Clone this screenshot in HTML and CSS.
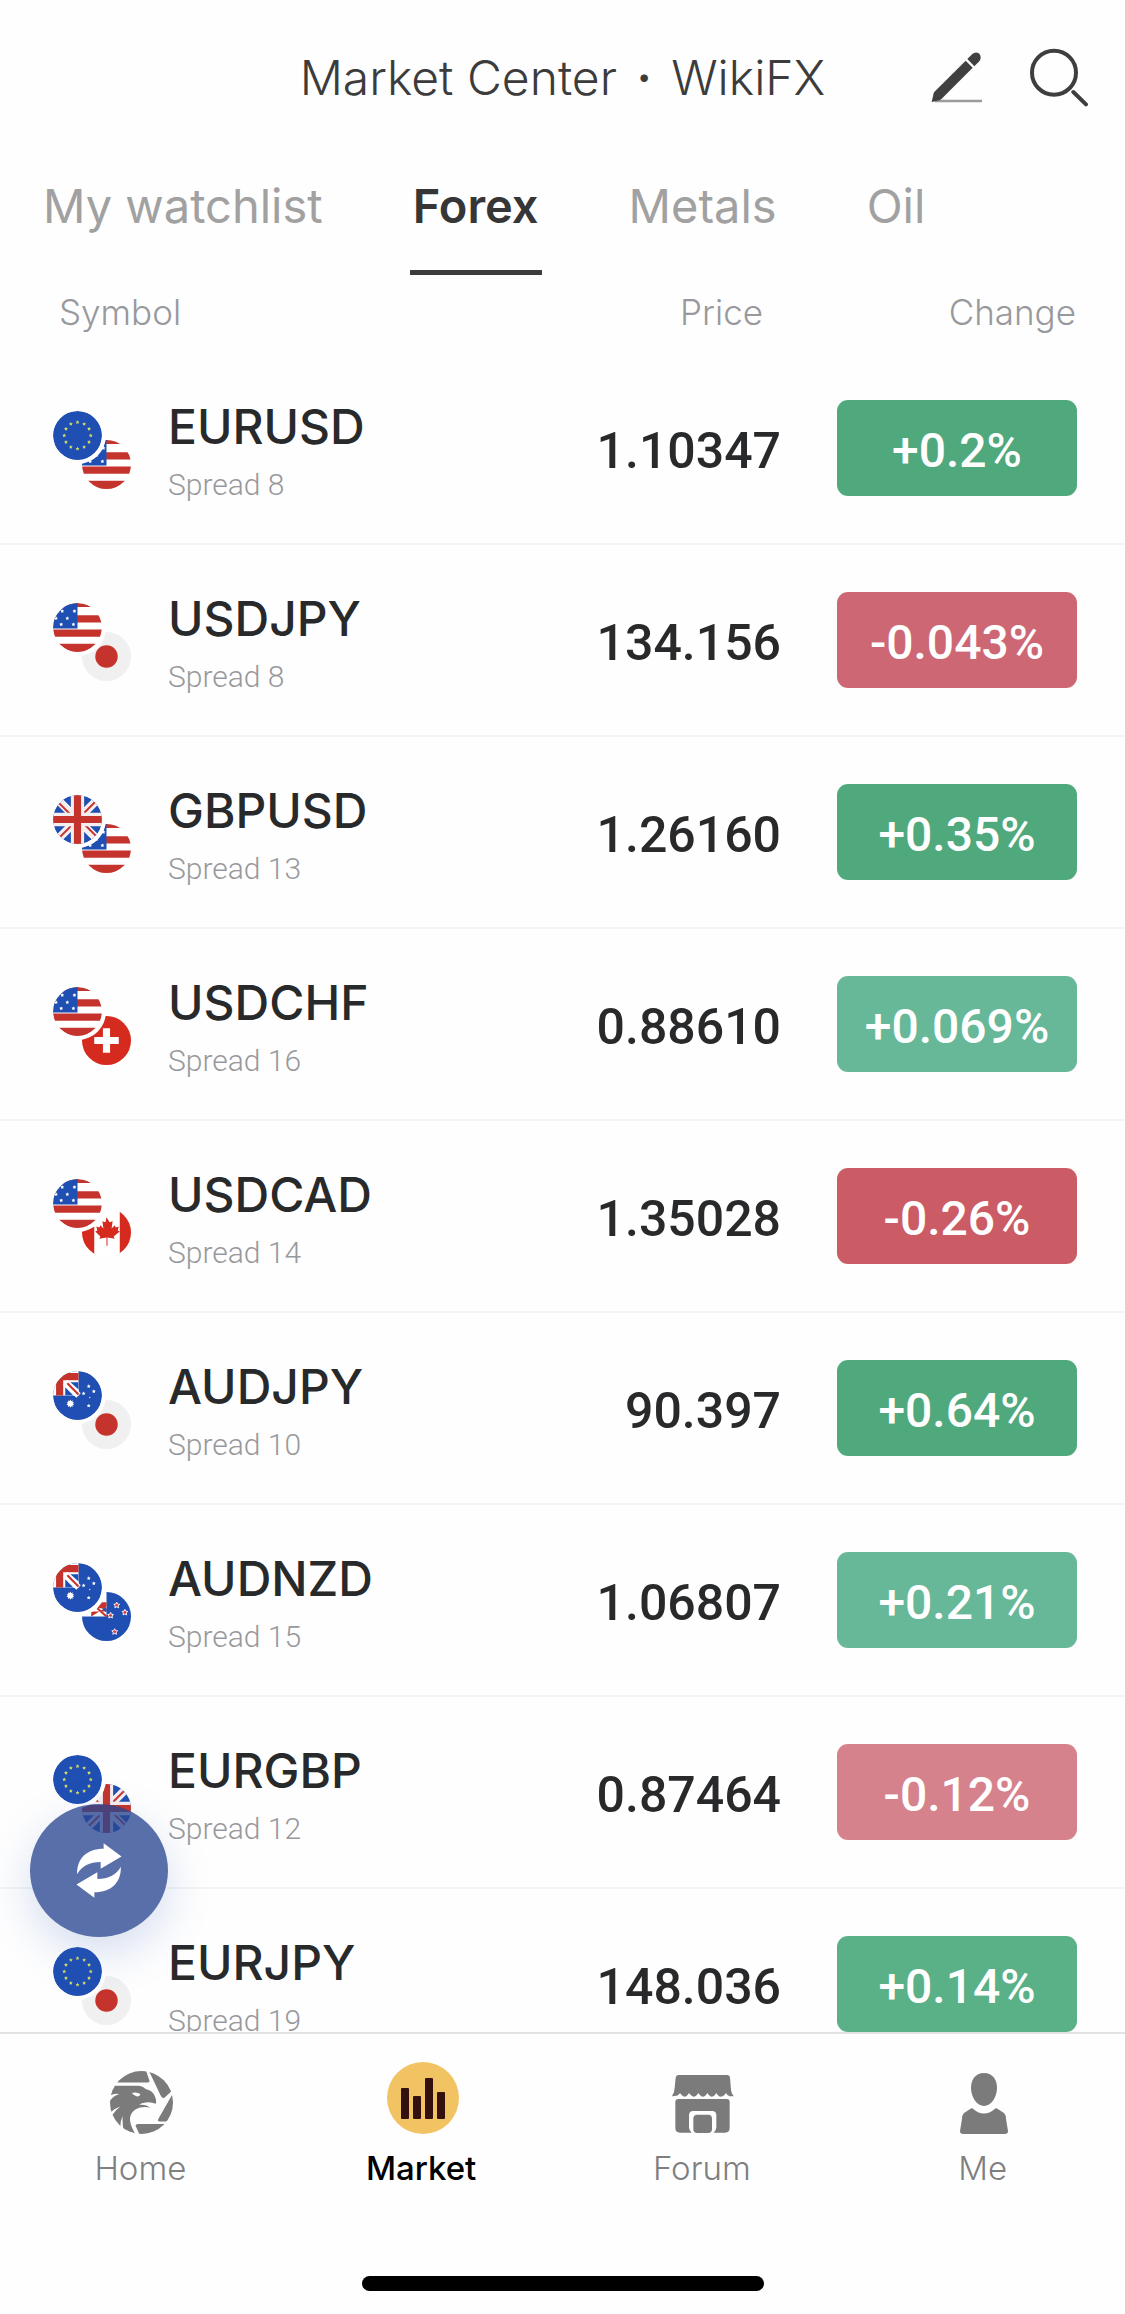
FILE: index.html
```html
<!DOCTYPE html>
<html lang="en">
<head>
<meta charset="utf-8">
<meta name="viewport" content="width=device-width, initial-scale=1">
<title>Market Center · WikiFX</title>
<link rel="stylesheet" href="styles.css">
</head>
<body>
<svg class="sprite" aria-hidden="true">
  <defs>
    <clipPath id="disc"><circle cx="24" cy="24" r="24"/></clipPath>
    <path id="star" d="M0-1L.29-.4L.95-.31L.48.15L.59.81L0 .5L-.59.81L-.48.15L-.95-.31L-.29-.4Z"/>
    <symbol id="eu" viewBox="0 0 48 48">
      <circle cx="24" cy="24" r="24" fill="#1f4fb2"/>
      <g fill="#d9dc62">
        <use href="#star" transform="translate(24 11) scale(2)"/><use href="#star" transform="translate(30.500 12.700) scale(2)"/>
        <use href="#star" transform="translate(35.300 17.500) scale(2)"/><use href="#star" transform="translate(37 24) scale(2)"/>
        <use href="#star" transform="translate(35.300 30.500) scale(2)"/><use href="#star" transform="translate(30.500 35.300) scale(2)"/>
        <use href="#star" transform="translate(24 37) scale(2)"/><use href="#star" transform="translate(17.500 35.300) scale(2)"/>
        <use href="#star" transform="translate(12.700 30.500) scale(2)"/><use href="#star" transform="translate(11 24) scale(2)"/>
        <use href="#star" transform="translate(12.700 17.500) scale(2)"/><use href="#star" transform="translate(17.500 12.700) scale(2)"/>
      </g>
    </symbol>
    <symbol id="us" viewBox="0 0 48 48">
      <g clip-path="url(#disc)">
        <rect width="48" height="48" fill="#fff"/>
        <path d="M0 0H48V4H0ZM0 12H48V19H0ZM0 26H48V33H0ZM0 40H48V48H0Z" fill="#c5342c"/>
        <rect width="24" height="25" fill="#1f4fb2"/>
        <g fill="#fff">
          <use href="#star" transform="translate(9 8) scale(2)"/><use href="#star" transform="translate(21 8) scale(2)"/>
          <use href="#star" transform="translate(3 15) scale(2)"/><use href="#star" transform="translate(14 15) scale(2)"/>
          <use href="#star" transform="translate(8 21) scale(2)"/><use href="#star" transform="translate(20 21) scale(2)"/>
        </g>
      </g>
    </symbol>
    <symbol id="jp" viewBox="0 0 48 48">
      <circle cx="24" cy="24" r="24" fill="#f0f0f0"/><circle cx="24" cy="24" r="11" fill="#c5342c"/>
    </symbol>
    <symbol id="gb" viewBox="0 0 48 48">
      <g clip-path="url(#disc)">
        <rect width="48" height="48" fill="#1f4fb2"/>
        <path d="M4 4L44 44M44 4L4 44" stroke="#f5eef0" stroke-width="8"/>
        <path d="M5 7L20 22M43 5L26 22M43 41L28 26M5 43L22 26" stroke="#c5342c" stroke-width="2"/>
        <path d="M24 0V48M0 24H48" stroke="#f5eef0" stroke-width="13"/>
        <path d="M24 0V48M0 24H48" stroke="#c5342c" stroke-width="7"/>
      </g>
    </symbol>
    <symbol id="ch" viewBox="0 0 48 48">
      <circle cx="24" cy="24" r="24" fill="#d52b1e"/><path d="M24 12V36M12 24H36" stroke="#fff" stroke-width="7"/>
    </symbol>
    <symbol id="ca" viewBox="0 0 48 48">
      <g clip-path="url(#disc)">
        <rect width="48" height="48" fill="#fff"/>
        <path d="M0 0H12V48H0ZM37 0H48V48H37Z" fill="#d52b1e"/>
        <path d="M24 9L27 14L30 13L29 20L32 17L33 19L36 18L35 22L37 23L31 28L32 30L25 29V37H24V29L17 30L18 28L13 23L15 22L14 18L17 19L18 17L21 20L20 13L23 14Z" fill="#d52b1e"/>
      </g>
    </symbol>
    <symbol id="au" viewBox="0 0 48 48">
      <g clip-path="url(#disc)">
        <rect width="48" height="48" fill="#1f4fb2"/>
        <rect width="25" height="24" fill="#fff"/>
        <path d="M3 24V9L10 2H25V9H10V24Z" fill="#c5342c"/>
        <path d="M12 11V24H25V11Z" fill="#fff"/>
        <path d="M17 11H25V18ZM12 16V24H20Z" fill="#1f4fb2"/>
        <path d="M12 11L25 24" stroke="#fff" stroke-width="6"/>
        <path d="M14 12L25 23" stroke="#c5342c" stroke-width="2"/>
      </g>
      <g fill="#fff">
        <use href="#star" transform="translate(17 32) scale(4)"/><use href="#star" transform="translate(17 32) rotate(36) scale(4)"/>
        <use href="#star" transform="translate(35 15) scale(2)"/><use href="#star" transform="translate(30 22) scale(2)"/>
        <use href="#star" transform="translate(40 20) scale(2)"/><use href="#star" transform="translate(36 26) scale(1)"/>
        <use href="#star" transform="translate(35 34) scale(2)"/>
      </g>
    </symbol>
    <symbol id="nz" viewBox="0 0 48 48">
      <g clip-path="url(#disc)">
        <rect width="48" height="48" fill="#1f4fb2"/>
        <rect width="24" height="24" fill="#fff"/>
        <path d="M9 24V19H24V16H14V10H24V15Z" fill="#c5342c"/>
        <path d="M15 16L24 24" stroke="#c5342c" stroke-width="2"/>
        <path d="M19 16H24V20Z" fill="#1f4fb2"/>
      </g>
      <g fill="#d23c4a" stroke="#fff" stroke-width=".3">
        <use href="#star" transform="translate(34 13) scale(3)"/><use href="#star" transform="translate(28 23) scale(3)"/>
        <use href="#star" transform="translate(42 20) scale(3)"/><use href="#star" transform="translate(32 39) scale(3)"/>
      </g>
    </symbol>
  </defs>
</svg>

<div class="app">
  <header class="topbar">
    <h1 class="title">Market Center <span class="dot">·</span> WikiFX</h1>
    <div class="actions">
      <button class="icon-button" type="button" aria-label="Edit watchlist">
        <svg width="52" height="52" viewBox="94 62 156 156">
          <path d="M105 212H247" stroke="#9b9b9b" stroke-width="7"/>
          <path d="M96 215L102 189Q103 186 106 183L198 91L219 112L126 205Q123 208 118 210Z" fill="#404040"/>
          <path d="M203 86L218 71Q228 62 239 70Q247 81 239 93L224 108Z" fill="#404040"/>
        </svg>
      </button>
      <button class="icon-button" type="button" aria-label="Search">
        <svg width="60" height="60" viewBox="386 48 180 180" fill="none" stroke="#3e3e3e" stroke-width="12" stroke-linecap="round">
          <circle cx="461" cy="125" r="66"/><path d="M519 183L557 220"/>
        </svg>
      </button>
    </div>
  </header>

  <nav class="tabs" aria-label="Markets">
    <a class="tab" href="#watchlist">My watchlist</a>
    <a class="tab tab-active" href="#forex" aria-current="page">Forex</a>
    <a class="tab" href="#metals">Metals</a>
    <a class="tab" href="#oil">Oil</a>
  </nav>

  <main class="quotes">
    <table class="quote-table">
      <thead>
        <tr><th class="col-symbol" scope="col">Symbol</th><th class="col-price" scope="col">Price</th><th class="col-change" scope="col">Change</th></tr>
      </thead>
      <tbody>
        <tr>
          <td><div class="pair"><div class="flags"><svg class="flag flag-back"><use href="#us"/></svg><svg class="flag flag-front"><use href="#eu"/></svg></div><div class="instrument"><div class="name">EURUSD</div><div class="spread">Spread 8</div></div></div></td>
          <td class="price">1.10347</td><td class="change"><span class="badge up-strong">+0.2%</span></td>
        </tr>
        <tr>
          <td><div class="pair"><div class="flags"><svg class="flag flag-back"><use href="#jp"/></svg><svg class="flag flag-front"><use href="#us"/></svg></div><div class="instrument"><div class="name">USDJPY</div><div class="spread">Spread 8</div></div></div></td>
          <td class="price">134.156</td><td class="change"><span class="badge down">-0.043%</span></td>
        </tr>
        <tr>
          <td><div class="pair"><div class="flags"><svg class="flag flag-back"><use href="#us"/></svg><svg class="flag flag-front"><use href="#gb"/></svg></div><div class="instrument"><div class="name">GBPUSD</div><div class="spread">Spread 13</div></div></div></td>
          <td class="price">1.26160</td><td class="change"><span class="badge up-strong">+0.35%</span></td>
        </tr>
        <tr>
          <td><div class="pair"><div class="flags"><svg class="flag flag-back"><use href="#ch"/></svg><svg class="flag flag-front"><use href="#us"/></svg></div><div class="instrument"><div class="name">USDCHF</div><div class="spread">Spread 16</div></div></div></td>
          <td class="price">0.88610</td><td class="change"><span class="badge up-soft">+0.069%</span></td>
        </tr>
        <tr>
          <td><div class="pair"><div class="flags"><svg class="flag flag-back"><use href="#ca"/></svg><svg class="flag flag-front"><use href="#us"/></svg></div><div class="instrument"><div class="name">USDCAD</div><div class="spread">Spread 14</div></div></div></td>
          <td class="price">1.35028</td><td class="change"><span class="badge down-strong">-0.26%</span></td>
        </tr>
        <tr>
          <td><div class="pair"><div class="flags"><svg class="flag flag-back"><use href="#jp"/></svg><svg class="flag flag-front"><use href="#au"/></svg></div><div class="instrument"><div class="name">AUDJPY</div><div class="spread">Spread 10</div></div></div></td>
          <td class="price">90.397</td><td class="change"><span class="badge up-strong">+0.64%</span></td>
        </tr>
        <tr>
          <td><div class="pair"><div class="flags"><svg class="flag flag-back"><use href="#nz"/></svg><svg class="flag flag-front"><use href="#au"/></svg></div><div class="instrument"><div class="name">AUDNZD</div><div class="spread">Spread 15</div></div></div></td>
          <td class="price">1.06807</td><td class="change"><span class="badge up-soft">+0.21%</span></td>
        </tr>
        <tr>
          <td><div class="pair"><div class="flags"><svg class="flag flag-back"><use href="#gb"/></svg><svg class="flag flag-front"><use href="#eu"/></svg></div><div class="instrument"><div class="name">EURGBP</div><div class="spread">Spread 12</div></div></div></td>
          <td class="price">0.87464</td><td class="change"><span class="badge down-soft">-0.12%</span></td>
        </tr>
        <tr>
          <td><div class="pair"><div class="flags"><svg class="flag flag-back"><use href="#jp"/></svg><svg class="flag flag-front"><use href="#eu"/></svg></div><div class="instrument"><div class="name">EURJPY</div><div class="spread">Spread 19</div></div></div></td>
          <td class="price">148.036</td><td class="change"><span class="badge up">+0.14%</span></td>
        </tr>
      </tbody>
    </table>
  </main>

  <footer class="dock">
    <button class="fab" type="button" aria-label="Switch account">
      <svg width="46" height="55" viewBox="230 370 138 166" fill="#fff">
        <path id="swap" d="M233 464C232 416 262 387 313 387V371L367 411L304 448V427C270 428 248 438 233 464Z"/>
        <use href="#swap" transform="rotate(180 299 453)"/>
      </svg>
    </button>
    <nav class="nav" aria-label="Main">
      <a class="nav-item" href="#home">
        <span class="nav-icon"><svg width="63" height="63" viewBox="57 61 188 188">
          <clipPath id="lens"><circle cx="151" cy="155" r="94"/></clipPath>
          <g clip-path="url(#lens)" fill="#7b7b7b">
            <path d="M60 95H169Q177 95 174 88L163 55H60Z"/>
            <path d="M171 56L207 132Q213 147 221 139L250 112V50Z"/>
            <path d="M247 124L202 203Q197 212 207 212H250Z"/>
            <path d="M141 219H240V255H147L134 226Q132 219 141 219Z"/>
            <path d="M50 105H140Q156 106 163 115Q184 119 191 137Q196 146 194 159Q180 153 164 155Q150 156 144 162Q164 159 177 170Q150 166 134 175Q114 187 117 210Q120 230 135 252H50Z"/>
          </g>
          <path d="M122 127Q135 122 148 130Q146 138 138 137Q129 136 122 127Z" fill="#fff"/>
          <path d="M56 135Q70 126 85 130Q69 134 58 149ZM58 185Q70 173 88 167Q75 176 64 192ZM90 236Q85 215 95 195Q93 218 98 240Z" fill="#fff"/>
        </svg></span>
        <span class="nav-label">Home</span>
      </a>
      <a class="nav-item nav-active" href="#market" aria-current="page">
        <span class="nav-icon"><svg width="72" height="72" viewBox="0 0 72 72">
          <circle cx="36" cy="36" r="36" fill="#f2c363"/>
          <g fill="#34100f"><rect x="14" y="26" width="8" height="31" rx="1"/><rect x="26" y="34" width="8" height="23" rx="1"/><rect x="38" y="16" width="8" height="41" rx="1"/><rect x="50" y="30" width="8" height="27" rx="1"/></g>
        </svg></span>
        <span class="nav-label">Market</span>
      </a>
      <a class="nav-item" href="#forum">
        <span class="nav-icon"><svg width="62" height="60" viewBox="74 66 186 180" fill="#7b7b7b">
          <path d="M93 69H239Q247 69 248 77L251 113Q252 125 259 133H247Q240 131 236 123Q230 134 218 134Q210 131 207 123Q201 134 192 134Q184 131 180 123Q175 134 165 134Q157 131 153 123Q147 134 138 134Q130 131 125 123Q119 134 111 134Q102 131 98 123Q93 133 74 133Q82 120 82 107L85 77Q86 69 93 69Z"/>
          <path d="M84 150Q84 141 93 141H238Q247 141 247 150V228Q247 242 233 242H199Q207 236 207 226V190Q207 177 194 177H138Q125 177 125 190V226Q125 236 133 242H98Q84 242 84 228Z"/>
          <rect x="138" y="188" width="56" height="55" rx="12"/>
        </svg></span>
        <span class="nav-label">Forum</span>
      </a>
      <a class="nav-item" href="#me">
        <span class="nav-icon"><svg width="48" height="61" viewBox="0 0 48 61" fill="#7b7b7b">
          <path d="M24 0C33 0 37 7 37 15C37 24 31 33 24 33S11 24 11 15C11 7 15 0 24 0Z"/>
          <path d="M12 35Q24 46 36 35Q38 36 44 40Q46 42 46 46L48 58Q48 61 45 61H3Q0 61 0 58L2 46Q2 42 4 40Q10 36 12 35Z"/>
        </svg></span>
        <span class="nav-label">Me</span>
      </a>
    </nav>
    <div class="home-indicator"></div>
  </footer>
</div>
</body>
</html>
```
FILE: styles.css
```css
* {
  box-sizing: border-box;
}

body {
  margin: 0;
  background: #fefefe;
  color: #28292b;
  font-family: Inter, "Liberation Sans", sans-serif;
}

.sprite {
  position: absolute;
  width: 0;
  height: 0;
}

.app {
  display: flex;
  flex-direction: column;
  height: 100vh;
}

/* Title bar */
.topbar {
  display: grid;
  grid-template-columns: 1fr auto 1fr;
  align-items: center;
  flex: none;
  padding: 46px 36px 48px;
}

.title {
  grid-column: 2;
  margin: 0;
  padding-top: 2px;
  color: #3c3c3c;
  font-size: 48px;
  font-weight: 300;
  line-height: 60px;
  white-space: nowrap;
}

.dot {
  margin: 0 6px;
  font-weight: 600;
}

.actions {
  display: flex;
  align-items: center;
  justify-content: flex-end;
  gap: 46px;
}

.icon-button {
  display: flex;
  padding: 0;
  border: 0;
  background: none;
}

/* Market tabs */
.tabs {
  display: flex;
  flex: none;
  gap: 84px;
  padding: 22px 40px 0;
}

.tab {
  padding: 0 3px 36px;
  border-bottom: 5px solid transparent;
  color: #a1a1a1;
  font-size: 47px;
  font-weight: 400;
  line-height: 56px;
  text-decoration: none;
  white-space: nowrap;
}

.tab-active {
  border-color: #3c3c3c;
  color: #363636;
  font-weight: 600;
}

/* Quote list */
.quotes {
  flex: 1;
  min-height: 0;
  overflow-y: auto;
  scrollbar-width: none;
}

.quote-table {
  width: 100%;
  border-spacing: 0;
  table-layout: fixed;
}

.quote-table th {
  height: 78px;
  padding: 0 0 4px;
  color: #98999d;
  font-size: 35px;
  font-weight: 300;
  text-align: right;
}

.quote-table .col-symbol {
  padding-left: 59px;
  text-align: left;
}

.quote-table .col-price {
  width: 240px;
  padding-right: 18px;
}

.quote-table .col-change {
  width: 344px;
  padding-right: 49px;
}

.quote-table td {
  height: 192px;
  padding: 0;
  border-bottom: 2px solid #f4f4f5;
}

.pair {
  display: flex;
  align-items: center;
  gap: 37px;
  padding: 4px 0 0 53px;
}

.flags {
  display: grid;
  width: 78px;
  height: 78px;
}

.flag {
  grid-area: 1 / 1;
  width: 49px;
  height: 49px;
}

.flag-back {
  place-self: end;
}

.flag-front {
  border-radius: 50%;
  background: #fefefe;
  box-shadow: 0 0 0 4px #fefefe;
}

.instrument {
  padding-top: 12px;
}

.name {
  font-size: 48px;
  font-weight: 500;
  line-height: 58px;
}

.spread {
  color: #98999d;
  font-family: Roboto, sans-serif;
  font-size: 30px;
  font-weight: 300;
  line-height: 58px;
}

.quote-table .price {
  padding-top: 6px;
  font-family: Roboto, sans-serif;
  font-size: 50px;
  font-weight: 500;
  text-align: right;
}

.quote-table .change {
  padding-right: 48px;
}

.badge {
  display: block;
  width: 240px;
  margin-left: auto;
  padding-top: 6px;
  border-radius: 11px;
  color: #fff;
  font-family: Roboto, sans-serif;
  font-size: 48px;
  font-weight: 500;
  line-height: 90px;
  text-align: center;
}

.up { background: #5ab087; }
.up-strong { background: #50a87d; }
.up-soft { background: #67b898; }
.down { background: #cd6774; }
.down-strong { background: #cb5c66; }
.down-soft { background: #d6828c; }

/* Bottom dock */
.dock {
  position: relative;
  flex: none;
  padding-bottom: 23px;
  border-top: 2px solid #e2e2e4;
  background: #fefefe;
}

.nav {
  display: grid;
  grid-template-columns: repeat(4, 1fr);
  padding: 28px 2px 0 0;
}

.nav-item {
  display: flex;
  flex-direction: column;
  align-items: center;
  gap: 14px;
  color: #7f7f7f;
  text-decoration: none;
}

.nav-active {
  color: #000;
}

.nav-icon {
  display: flex;
  align-items: flex-end;
  height: 72px;
  padding-left: 3px;
}

.nav-label {
  font-size: 33px;
  font-weight: 300;
  line-height: 40px;
}

.nav-active .nav-label {
  font-weight: 500;
}

.home-indicator {
  width: 402px;
  max-width: 60%;
  height: 15px;
  margin: 88px auto 0;
  border-radius: 8px;
  background: #000;
}

/* Floating button over the list */
.fab {
  position: absolute;
  bottom: 100%;
  left: 30px;
  display: flex;
  align-items: center;
  justify-content: center;
  width: 138px;
  height: 133px;
  margin-bottom: 97px;
  padding: 0;
  border: 0;
  border-radius: 50%;
  background: rgba(42, 70, 145, .78);
  box-shadow: 0 16px 44px rgba(70, 105, 190, .22);
}
```
